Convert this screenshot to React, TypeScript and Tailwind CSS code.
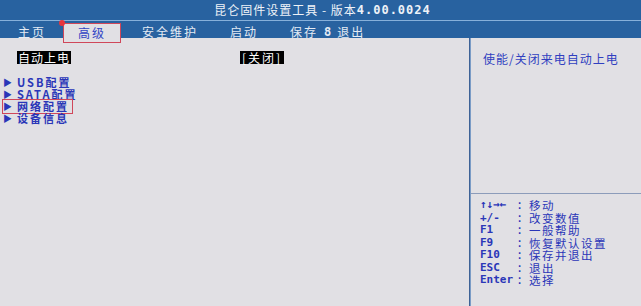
import React from 'react';

const cjk = { fontFamily: '"Noto Sans CJK SC", "DejaVu Sans", sans-serif' };
const mono = { fontFamily: '"DejaVu Sans Mono", "Liberation Mono", "Noto Sans CJK SC", monospace' };

const menuItems = ['USB配置', 'SATA配置', '网络配置', '设备信息'];

const helpRows = [
  { key: '↑↓→←', text: '移动' },
  { key: '+/-', text: '改变数值' },
  { key: 'F1', text: '一般帮助' },
  { key: 'F9', text: '恢复默认设置' },
  { key: 'F10', text: '保存并退出' },
  { key: 'ESC', text: '退出' },
  { key: 'Enter', text: '选择' },
];

export default function App() {
  return (
    <div className="w-[641px] h-[306px] bg-[#e1e0e4] flex flex-col overflow-hidden text-[12px]" style={cjk}>
      {/* title */}
      <div className="h-[20px] bg-[#2862a0] flex items-center justify-center text-[#eef2f8] pl-[4px] tracking-[1px]">
        <span>昆仑固件设置工具 - 版本</span>
        <span className="font-bold tracking-[1px]" style={mono}>4.00.0024</span>
      </div>
      <div className="h-px bg-[#86b0da]" />

      {/* tabs */}
      <div className="h-[17px] bg-[#2862a0] flex items-start text-[#e4ebf4] relative">
        <span className="ml-[18px] mt-[2px] tracking-[2px]">主页</span>
        <div className="relative ml-[17px] mt-[2px] w-[58px] h-[20px] bg-[#e1e0e4] border border-[#d0475a] flex items-center justify-center text-[#3344c4] tracking-[2px] z-10">
          高级
          <span className="absolute -left-[5px] -top-[4px] w-[6px] h-[6px] rounded-full bg-[#e8343c]" />
        </div>
        <span className="ml-[21px] mt-[2px] tracking-[2px]">安全维护</span>
        <span className="ml-[32px] mt-[2px] tracking-[2px]">启动</span>
        <span className="ml-[32px] mt-[2px] flex items-center">
          <span className="tracking-[2px]">保存</span>
          <span className="font-bold mx-[6px]" style={mono}>8</span>
          <span className="tracking-[2px]">退出</span>
        </span>
      </div>

      {/* body */}
      <div className="flex-1 flex">
        <div className="w-[469px] pt-[13px]">
          <div className="flex h-[13px] items-center">
            <span className="ml-[17px] bg-black text-white leading-[13px] px-[1px] tracking-[1px]">自动上电</span>
            <span className="ml-[169px] bg-black text-white leading-[13px] px-[2px] tracking-[2px]">[关闭]</span>
          </div>
          <div className="mt-[12px] flex flex-col">
            {menuItems.map((item, i) => (
              <div key={item} className="h-[12px] flex items-center">
                <div
                  className={`flex items-center h-[13px] ml-[3px] pr-[3px] ${
                    i === 2 ? 'outline outline-1 outline-[#d0475a]' : ''
                  }`}
                >
                  <span className="text-[#2a36b8] text-[9px] w-[14px] leading-none">▶</span>
                  <span className="text-[#2a36b8] text-[11px] leading-[12px] tracking-[2px] font-bold">{item}</span>
                </div>
              </div>
            ))}
          </div>
        </div>

        <div className="w-[1px] bg-[#3d6296]" />
        <div className="w-[1px] bg-[#7b9cc6]" />

        <div className="flex-1 flex flex-col">
          <div className="h-[155px] pl-[12px] pt-[12px] text-[#3040c0] tracking-[1px]">
            使能/关闭来电自动上电
          </div>
          <div className="h-px bg-[#8c9cba]" />
          <div className="pl-[9px] pt-[5px] flex flex-col text-[#2a36b8]">
            {helpRows.map((row) => (
              <div key={row.key} className="h-[12.5px] flex items-center leading-[12.5px]">
                <span className="w-[36px] font-bold text-[11px]" style={mono}>{row.key}</span>
                <span className="w-[13px]" style={mono}>:</span>
                <span className="text-[11.5px] tracking-[1.5px]">{row.text}</span>
              </div>
            ))}
          </div>
        </div>
      </div>
    </div>
  );
}
